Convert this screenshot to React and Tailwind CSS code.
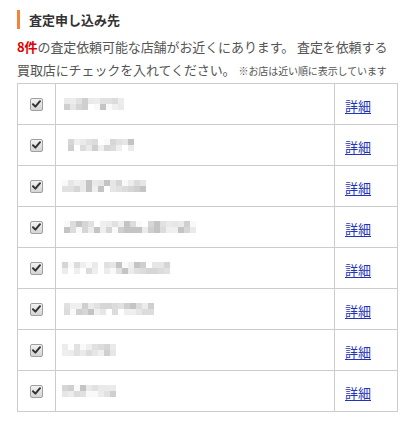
import React from 'react';

// blurred shop names, drawn as mosaic blocks (width in cells, seed)
const SHOPS = [
  { w: 10, seed: 3, x: 8 },
  { w: 11, seed: 7, x: 12 },
  { w: 14, seed: 11, x: 6 },
  { w: 22, seed: 5, x: 8 },
  { w: 18, seed: 13, x: 6 },
  { w: 15, seed: 2, x: 8 },
  { w: 9, seed: 17, x: 6 },
  { w: 9, seed: 19, x: 6 },
];

const SHADES = ['#f5f5f5', '#efefef', '#eaeaea', '#e6e6e6', '#e1e1e1', '#dcdcdc', '#d6d6d6', '#cfcfcf', '#c4c4c4', '#f9f9f9', '#ececec'];

function mosaic(w, seed) {
  const cells = [];
  let s = seed * 9301 + 49297;
  for (let r = 0; r < 2; r++) {
    const row = [];
    for (let c = 0; c < w; c++) {
      s = (s * 9301 + 49297) % 233280;
      const v = s / 233280;
      row.push(v < 0.1 ? '#ffffff' : SHADES[Math.floor(v * SHADES.length)]);
    }
    cells.push(row);
  }
  return cells;
}

function Mosaic({ w, seed, x }) {
  const rows = mosaic(w, seed);
  return (
    <div className="flex flex-col blur-[0.3px]" style={{ marginLeft: x }}>
      {rows.map((row, i) => (
        <div key={i} className="flex">
          {row.map((c, j) => (
            <div key={j} className="w-[6px] h-[6px]" style={{ backgroundColor: c }} />
          ))}
        </div>
      ))}
    </div>
  );
}

function Check() {
  return (
    <div className="w-[13px] h-[13px] rounded-[2px] border border-[#a0a0a0] bg-gradient-to-b from-[#f2f2f2] to-[#d4d4d4] flex items-center justify-center">
      <svg width="9" height="8" viewBox="0 0 9 8">
        <path d="M1 4.3 L3.4 6.6 L8 1.2" fill="none" stroke="#333" strokeWidth="2" strokeLinecap="round" strokeLinejoin="round" />
      </svg>
    </div>
  );
}

export default function App() {
  return (
    <div className="w-[411px] h-[438px] bg-white pl-[17px] pr-[13px] pt-[10px] text-[#555]" style={{ fontFamily: '"Noto Sans CJK JP", "Noto Sans", sans-serif' }}>
      <div className="flex items-center h-[19px] border-l-[3px] border-[#f0853a] pl-[9px]">
        <span className="text-[13px] font-bold text-[#333] leading-none">査定申し込み先</span>
      </div>

      <p className="mt-[6px] text-[13px] leading-[23px] tracking-[-0.1px] whitespace-nowrap">
        <span className="text-[#e00000] font-bold">8件</span>の査定依頼可能な店舗がお近くにあります。 査定を依頼する
        <br />
        買取店にチェックを入れてください。<span className="text-[10px] ml-[3px]">※お店は近い順に表示しています</span>
      </p>

      <table className="mt-[1px] w-[381px] border-collapse border border-[#cccccc]">
        <tbody>
          {SHOPS.map((s, i) => (
            <tr key={i} className="h-[41px]">
              <td className="w-[38px] border border-[#cccccc] p-0">
                <div className="flex justify-center"><Check /></div>
              </td>
              <td className="border border-[#cccccc] p-0">
                <Mosaic w={s.w} seed={s.seed} x={s.x} />
              </td>
              <td className="w-[63px] border border-[#cccccc] pl-[10px] p-0">
                <a href="#" className="text-[13px] text-[#2434b8] underline underline-offset-2">詳細</a>
              </td>
            </tr>
          ))}
        </tbody>
      </table>
    </div>
  );
}
